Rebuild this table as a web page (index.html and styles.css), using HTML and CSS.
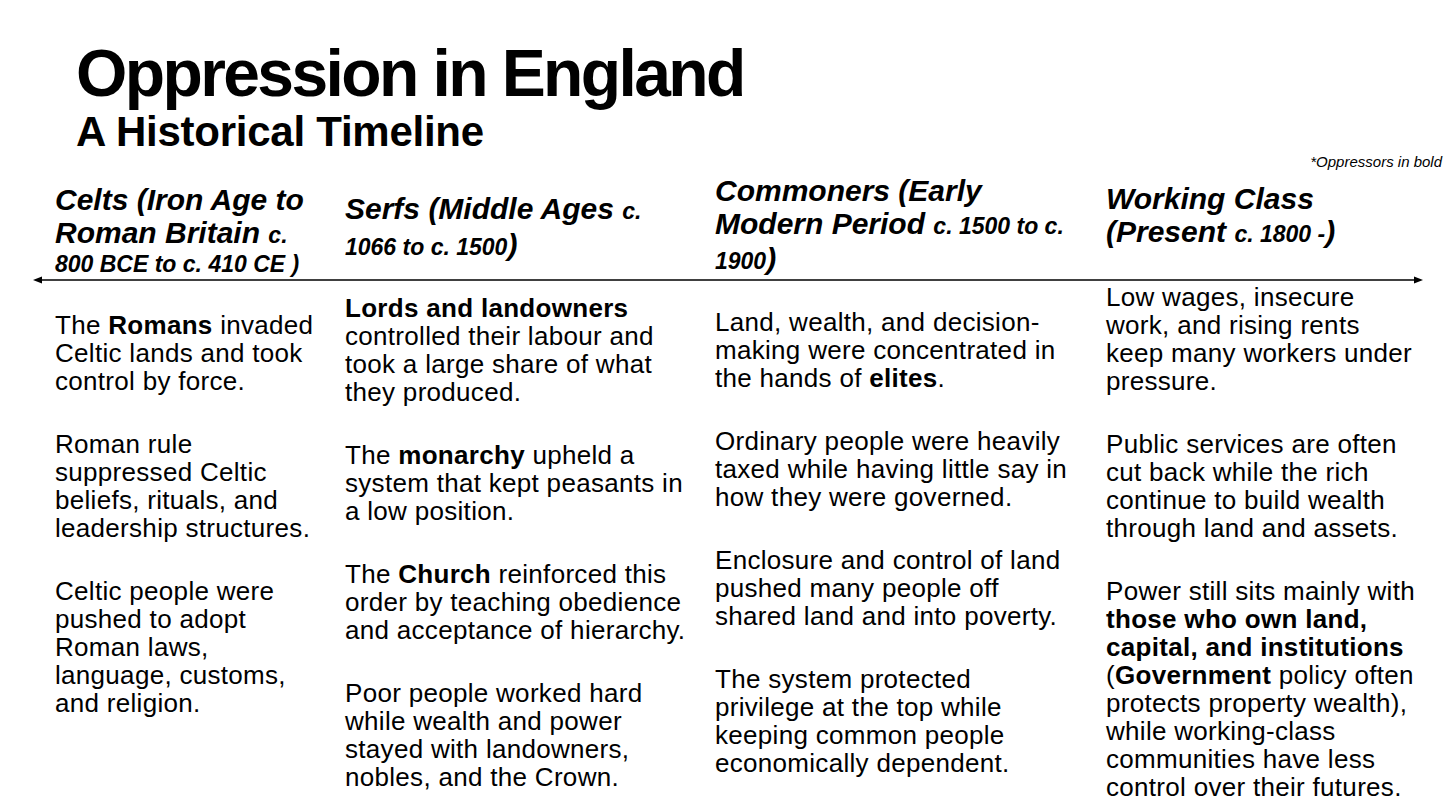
FILE: index.html
```html
<!DOCTYPE html>
<html lang="en">
<head>
<meta charset="utf-8">
<title>Oppression in England</title>
<link rel="stylesheet" href="styles.css">
</head>
<body>
<main class="slide">
  <header class="masthead">
    <h1 class="title">Oppression in England</h1>
    <h2 class="subtitle">A Historical Timeline</h2>
  </header>
  <p class="note">*Oppressors in bold</p>

  <section class="eras heads">
    <div class="era-head h1">
      <div class="hl">Celts (Iron Age to</div>
      <div class="hl">Roman Britain <span class="dt">c.</span></div>
      <div class="hl sm-line">800 BCE to c. 410 CE )</div>
    </div>
    <div class="era-head h2">
      <div class="hl">Serfs (Middle Ages <span class="dt">c.</span></div>
      <div class="hl"><span class="dt">1066 to c. 1500</span>)</div>
    </div>
    <div class="era-head h3">
      <div class="hl">Commoners (Early</div>
      <div class="hl">Modern Period <span class="dt">c. 1500 to c.</span></div>
      <div class="hl tail-line"><span class="dt">1900</span>)</div>
    </div>
    <div class="era-head h4">
      <div class="hl">Working Class</div>
      <div class="hl">(Present <span class="dt">c. 1800 -</span>)</div>
    </div>
  </section>

  <svg class="axis" viewBox="0 0 1456 10" width="1456" height="10" aria-hidden="true">
    <line x1="40" y1="5" x2="1416" y2="5" stroke="#000" stroke-width="1.6"/>
    <polygon points="33,5 42,1.6 42,8.4" fill="#000"/>
    <polygon points="1423,5 1414,1.6 1414,8.4" fill="#000"/>
  </svg>

  <section class="eras bodies">
    <div class="era-body b1">
      <p>The <b>Romans</b> invaded<br>Celtic lands and took<br>control by force.</p>
      <p>Roman rule<br>suppressed Celtic<br>beliefs, rituals, and<br>leadership structures.</p>
      <p>Celtic people were<br>pushed to adopt<br>Roman laws,<br>language, customs,<br>and religion.</p>
    </div>
    <div class="era-body b2">
      <p><b>Lords and landowners</b><br>controlled their labour and<br>took a large share of what<br>they produced.</p>
      <p>The <b>monarchy</b> upheld a<br>system that kept peasants in<br>a low position.</p>
      <p>The <b>Church</b> reinforced this<br>order by teaching obedience<br>and acceptance of hierarchy.</p>
      <p>Poor people worked hard<br>while wealth and power<br>stayed with landowners,<br>nobles, and the Crown.</p>
    </div>
    <div class="era-body b3">
      <p>Land, wealth, and decision-<br>making were concentrated in<br>the hands of <b>elites</b>.</p>
      <p>Ordinary people were heavily<br>taxed while having little say in<br>how they were governed.</p>
      <p>Enclosure and control of land<br>pushed many people off<br>shared land and into poverty.</p>
      <p>The system protected<br>privilege at the top while<br>keeping common people<br>economically dependent.</p>
    </div>
    <div class="era-body b4">
      <p>Low wages, insecure<br>work, and rising rents<br>keep many workers under<br>pressure.</p>
      <p>Public services are often<br>cut back while the rich<br>continue to build wealth<br>through land and assets.</p>
      <p>Power still sits mainly with<br><b>those who own land,<br>capital, and institutions</b><br>(<b>Government</b> policy often<br>protects property wealth),<br>while working-class<br>communities have less<br>control over their futures.</p>
    </div>
  </section>
</main>
</body>
</html>
```
FILE: styles.css
```css
html, body {
  margin: 0;
  padding: 0;
  background: #fff;
}

body {
  font-family: "Liberation Sans", Arial, Helvetica, sans-serif;
  color: #000;
}

.slide {
  width: 1456px;
  height: 810px;
  overflow: hidden;
}

.masthead {
  padding: 40px 0 0 76px;
}

.title {
  margin: 0;
  font-size: 66px;
  line-height: 66px;
  font-weight: 700;
  letter-spacing: -2.6px;
}

.subtitle {
  margin: 4px 0 0;
  font-size: 42px;
  line-height: 44px;
  font-weight: 700;
  letter-spacing: -0.25px;
}

.note {
  margin: 0;
  padding-right: 14px;
  text-align: right;
  font-style: italic;
  font-size: 15px;
  line-height: 16px;
}

.eras {
  display: grid;
  grid-template-columns: 290px 370px 391px 1fr;
  padding-left: 55px;
}

.heads {
  margin-top: 4px;
  height: 101px;
}

.era-head {
  font-weight: 700;
  font-style: italic;
  font-size: 30px;
}

.hl {
  line-height: 33px;
  white-space: nowrap;
}

.hl .dt {
  font-size: 23px;
}

.hl.sm-line {
  font-size: 23px;
  line-height: 25px;
}

.hl.tail-line {
  line-height: 31px;
}

.h1 { padding-top: 9px; }
.h2 { padding-top: 18px; }
.h3 { padding-top: 0; }
.h4 { padding-top: 8px; }

.axis {
  display: block;
}

.bodies {
  margin-top: -2px;
}

.era-body p {
  margin: 0 0 35px;
  font-size: 26px;
  line-height: 28px;
  letter-spacing: 0.3px;
  white-space: nowrap;
}

.era-body b {
  font-weight: 700;
}

.b1 { padding-top: 28px; }
.b2 { padding-top: 11px; }
.b3 { padding-top: 25px; }
.b4 { padding-top: 0; }
```
